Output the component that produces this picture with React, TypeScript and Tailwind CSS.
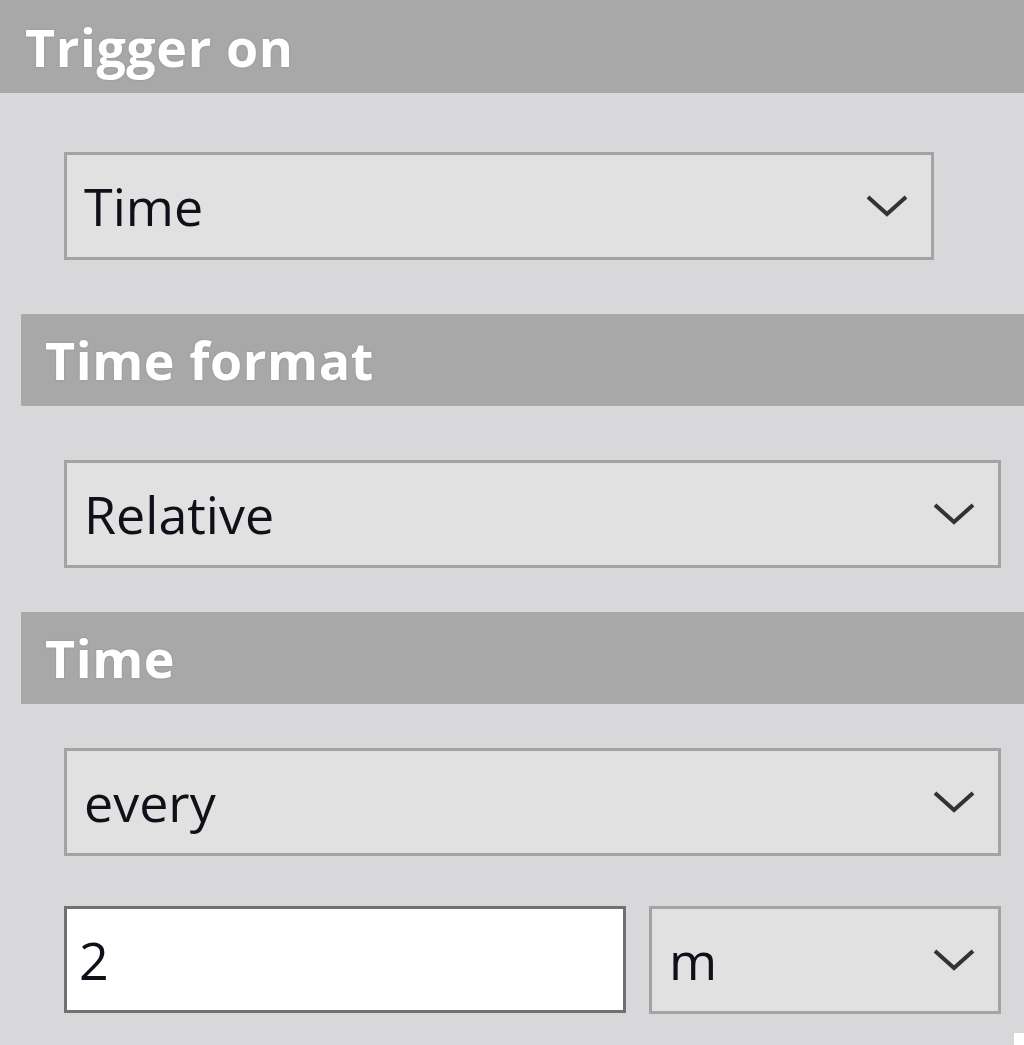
import React from 'react';

const font = { fontFamily: '"Open Sans", "Noto Sans", sans-serif' };

function Chevron() {
  return (
    <svg width="44" height="26" viewBox="0 0 44 26" className="shrink-0">
      <path d="M3 4 L22 21 L41 4" fill="none" stroke="#333333" strokeWidth="4" strokeLinejoin="miter" />
    </svg>
  );
}

function SectionHeader({ label, inset }: { label: string; inset?: boolean }) {
  return (
    <div
      className={`flex h-[92px] items-center bg-[#a8a8a8] ${inset ? 'ml-[21px] pl-[24px]' : 'h-[93px] pl-[25px]'}`}
    >
      <span className="text-[52px] font-bold leading-none tracking-[0.6px] text-white [text-shadow:0_0_2px_rgba(120,120,140,0.6)]">
        {label}
      </span>
    </div>
  );
}

function Select({ value, className }: { value: string; className: string }) {
  return (
    <div
      className={`flex h-[108px] items-center justify-between border-[3px] border-[#a3a3a3] bg-[#e1e1e1] pl-[17px] pr-[22px] ${className}`}
    >
      <span className="text-[52px] leading-none text-[#101018]">{value}</span>
      <Chevron />
    </div>
  );
}

export default function App() {
  return (
    <div className="relative h-[1045px] w-[1024px] overflow-hidden bg-[#d8d7da]" style={font}>
      <SectionHeader label="Trigger on" />

      <div className="mt-[59px] pl-[64px]">
        <Select value="Time" className="w-[870px]" />
      </div>

      <div className="mt-[54px]">
        <SectionHeader label="Time format" inset />
      </div>

      <div className="mt-[54px] pl-[64px]">
        <Select value="Relative" className="w-[937px]" />
      </div>

      <div className="mt-[44px]">
        <SectionHeader label="Time" inset />
      </div>

      <div className="mt-[44px] pl-[64px]">
        <Select value="every" className="h-[107px] w-[937px]" />
      </div>

      <div className="mt-[50px] flex gap-[23px] pl-[64px]">
        <div className="flex h-[107px] w-[562px] items-center border-[3px] border-[#707070] bg-white pl-[12px]">
          <span className="text-[52px] leading-none text-[#101018]">2</span>
        </div>
        <Select value="m" className="h-[107px] w-[352px]" />
      </div>

      <div className="absolute bottom-0 right-0 h-[12px] w-[10px] bg-white" />
    </div>
  );
}
